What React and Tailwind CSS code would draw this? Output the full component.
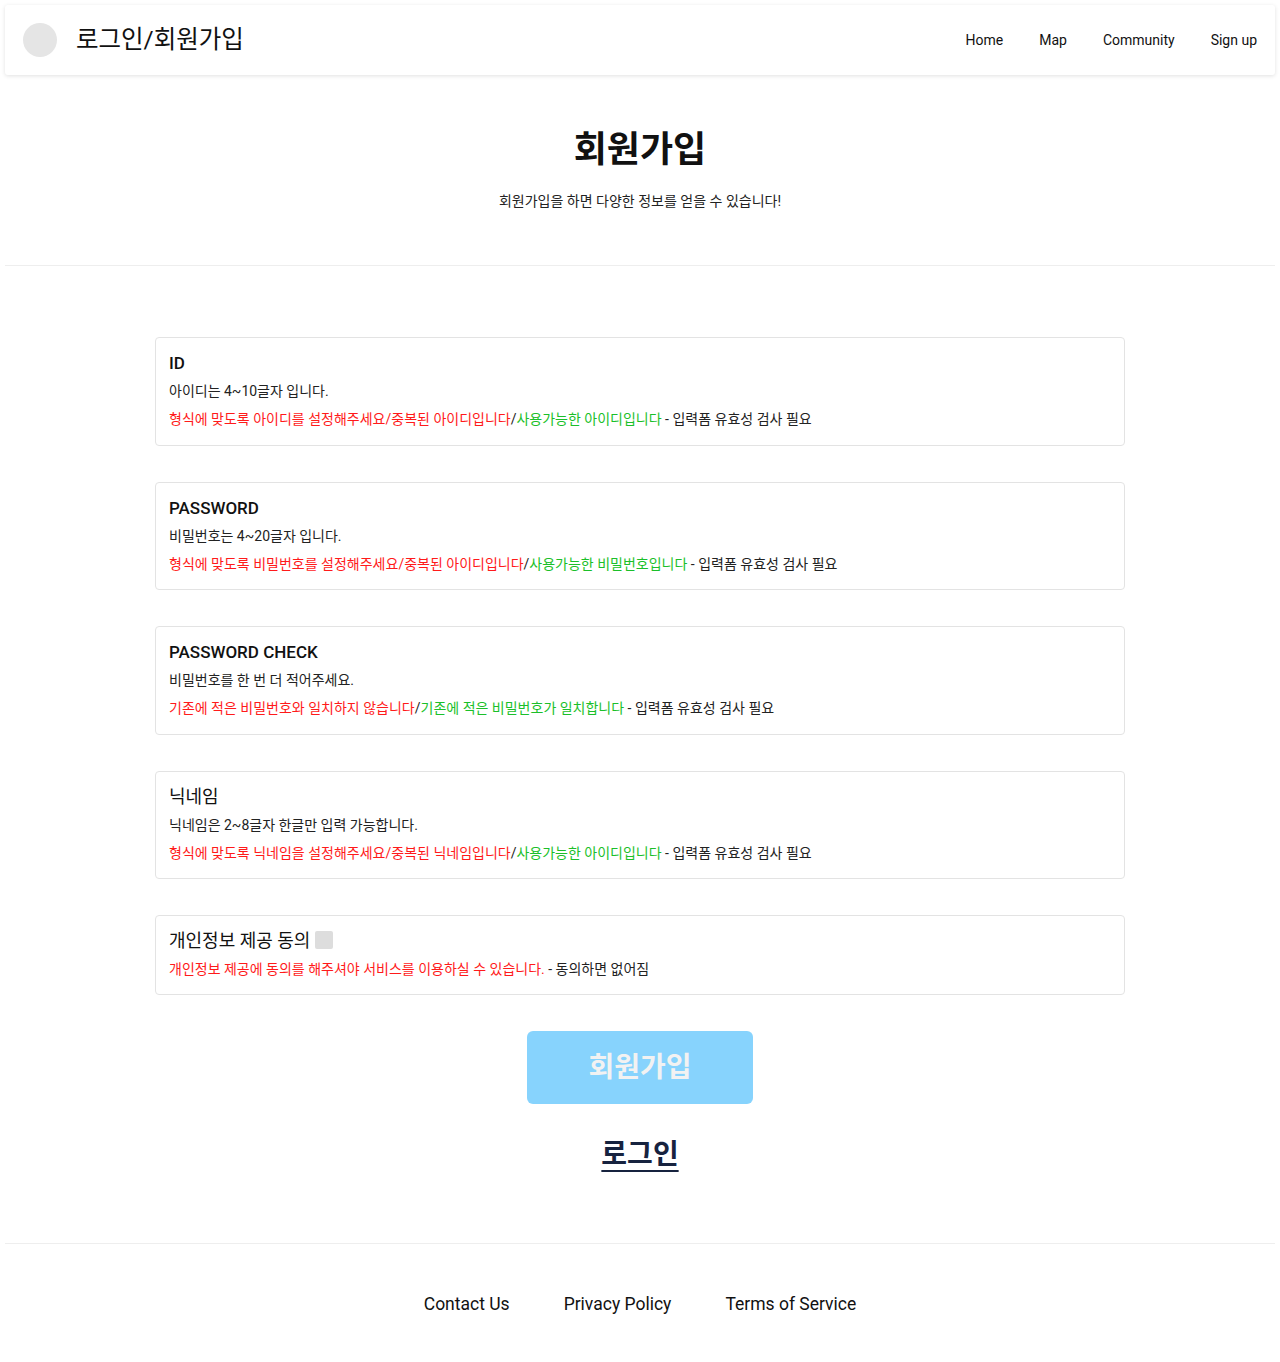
const font = { fontFamily: "Roboto, 'Noto Sans CJK KR', sans-serif" };

const fields = [
  {
    title: "ID",
    bold: true,
    desc: "아이디는 4~10글자 입니다.",
    red: "형식에 맞도록 아이디를 설정해주세요/중복된 아이디입니다",
    green: "사용가능한 아이디입니다",
  },
  {
    title: "PASSWORD",
    bold: true,
    desc: "비밀번호는 4~20글자 입니다.",
    red: "형식에 맞도록 비밀번호를 설정해주세요/중복된 아이디입니다",
    green: "사용가능한 비밀번호입니다",
  },
  {
    title: "PASSWORD CHECK",
    bold: true,
    desc: "비밀번호를 한 번 더 적어주세요.",
    red: "기존에 적은 비밀번호와 일치하지 않습니다",
    green: "기존에 적은 비밀번호가 일치합니다",
  },
  {
    title: "닉네임",
    bold: false,
    desc: "닉네임은 2~8글자 한글만 입력 가능합니다.",
    red: "형식에 맞도록 닉네임을 설정해주세요/중복된 닉네임입니다",
    green: "사용가능한 아이디입니다",
  },
];

const FieldCard = ({ field }) => (
  <div className="border border-[#e3e3e3] rounded-[4px] px-[13px] pt-[13px] pb-[15.5px]">
    <div
      className={`h-[24px] leading-[24px] text-[#111] ${
        field.bold ? "text-[17px] font-medium" : "text-[18px]"
      }`}
    >
      {field.title}
    </div>
    <div className="mt-[6px] h-[20px] leading-[20px] text-[14px] text-[#222]">{field.desc}</div>
    <div className="mt-[8px] h-[20px] leading-[20px] text-[14px] text-[#222]">
      <span className="text-[#ff1a1a]">{field.red}</span>/
      <span className="text-[#1bbf2a]">{field.green}</span> - 입력폼 유효성 검사 필요
    </div>
  </div>
);

export default function App() {
  return (
    <div className="min-h-[1362px] bg-white text-[#111]" style={font}>
      {/* header */}
      <header className="m-[5px] h-[70px] flex items-center justify-between pl-[18px] pr-[18px] rounded-[3px] shadow-[0_1px_4px_rgba(0,0,0,0.12)]">
        <div className="flex items-center gap-[19px]">
          <div className="w-[34px] h-[34px] rounded-full bg-[#e5e5e5]" />
          <span className="text-[24.5px] text-[#111]">로그인/회원가입</span>
        </div>
        <nav className="flex items-center gap-[36px] text-[14px] text-[#111]">
          <a>Home</a>
          <a>Map</a>
          <a>Community</a>
          <a>Sign up</a>
        </nav>
      </header>

      {/* hero */}
      <section className="mx-[5px] border-b border-[#eeeeee] pt-[50px] pb-[54px] text-center">
        <h1 className="text-[36px] leading-[40px] font-bold">회원가입</h1>
        <p className="mt-[21px] text-[14px] leading-[20px] text-[#222]">
          회원가입을 하면 다양한 정보를 얻을 수 있습니다!
        </p>
      </section>

      {/* form */}
      <main className="max-w-[970px] mx-auto pt-[71px] flex flex-col gap-[36px]">
        {fields.map((f) => (
          <FieldCard key={f.title} field={f} />
        ))}

        <div className="border border-[#e3e3e3] rounded-[4px] px-[13px] pt-[12px] pb-[15px]">
          <div className="h-[24px] flex items-center gap-[5px] text-[18px] text-[#111]">
            <span>개인정보 제공 동의</span>
            <span className="w-[18px] h-[18px] bg-[#dddddd] rounded-[2px]" />
          </div>
          <div className="mt-[7px] h-[20px] leading-[20px] text-[14px] text-[#222]">
            <span className="text-[#ff1a1a]">
              개인정보 제공에 동의를 해주셔야 서비스를 이용하실 수 있습니다.
            </span>{" "}
            - 동의하면 없어짐
          </div>
        </div>
      </main>

      <div className="flex flex-col items-center mt-[36px]">
        <button className="w-[226px] h-[73px] rounded-[6px] bg-[#87d3fd] text-[#f2f2f2] text-[28px] font-bold">
          회원가입
        </button>
        <a className="mt-[33px] text-[28px] leading-[36px] font-bold text-[#17233f] underline underline-offset-[6px] decoration-[2px]">
          로그인
        </a>
      </div>

      {/* footer */}
      <footer className="mx-[5px] mt-[70px] border-t border-[#eeeeee] pt-[48px] pb-[47px] flex justify-center gap-[54px] text-[17.5px] leading-[24px] text-[#111]">
        <a>Contact Us</a>
        <a>Privacy Policy</a>
        <a>Terms of Service</a>
      </footer>
    </div>
  );
}
